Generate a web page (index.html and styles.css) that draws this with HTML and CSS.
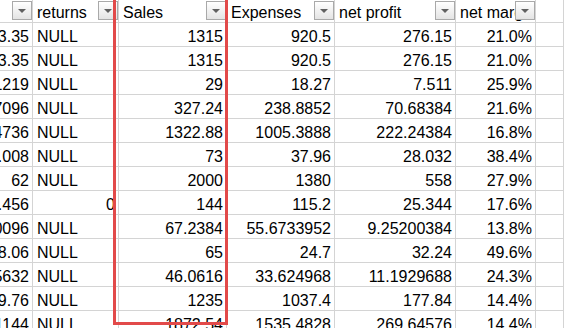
FILE: index.html
```html
<!DOCTYPE html>
<html>
<head>
<meta charset="utf-8">
<link rel="stylesheet" href="styles.css">
</head>
<body>
<div class="sheet">
  <div class="c"><span class="dd"></span></div>
  <div class="c">returns<span class="dd"></span></div>
  <div class="c">Sales<span class="dd"></span></div>
  <div class="c">Expenses<span class="dd"></span></div>
  <div class="c">net profit<span class="dd"></span></div>
  <div class="c">net margin<span class="dd"></span></div>
  <div class="c"></div>

  <div class="c n">643.35</div><div class="c">NULL</div><div class="c n">1315</div><div class="c n">920.5</div><div class="c n">276.15</div><div class="c n">21.0%</div><div class="c"></div>
  <div class="c n">643.35</div><div class="c">NULL</div><div class="c n">1315</div><div class="c n">920.5</div><div class="c n">276.15</div><div class="c n">21.0%</div><div class="c"></div>
  <div class="c n">0.1219</div><div class="c">NULL</div><div class="c n">29</div><div class="c n">18.27</div><div class="c n">7.511</div><div class="c n">25.9%</div><div class="c"></div>
  <div class="c n">0.67096</div><div class="c">NULL</div><div class="c n">327.24</div><div class="c n">238.8852</div><div class="c n">70.68384</div><div class="c n">21.6%</div><div class="c"></div>
  <div class="c n">0.14736</div><div class="c">NULL</div><div class="c n">1322.88</div><div class="c n">1005.3888</div><div class="c n">222.24384</div><div class="c n">16.8%</div><div class="c"></div>
  <div class="c n">51.008</div><div class="c">NULL</div><div class="c n">73</div><div class="c n">37.96</div><div class="c n">28.032</div><div class="c n">38.4%</div><div class="c"></div>
  <div class="c n">62</div><div class="c">NULL</div><div class="c n">2000</div><div class="c n">1380</div><div class="c n">558</div><div class="c n">27.9%</div><div class="c"></div>
  <div class="c n">51.456</div><div class="c n">0</div><div class="c n">144</div><div class="c n">115.2</div><div class="c n">25.344</div><div class="c n">17.6%</div><div class="c"></div>
  <div class="c n">0.00096</div><div class="c">NULL</div><div class="c n">67.2384</div><div class="c n">55.6733952</div><div class="c n">9.25200384</div><div class="c n">13.8%</div><div class="c"></div>
  <div class="c n">338.06</div><div class="c">NULL</div><div class="c n">65</div><div class="c n">24.7</div><div class="c n">32.24</div><div class="c n">49.6%</div><div class="c"></div>
  <div class="c n">0.65632</div><div class="c">NULL</div><div class="c n">46.0616</div><div class="c n">33.624968</div><div class="c n">11.1929688</div><div class="c n">24.3%</div><div class="c"></div>
  <div class="c n">859.76</div><div class="c">NULL</div><div class="c n">1235</div><div class="c n">1037.4</div><div class="c n">177.84</div><div class="c n">14.4%</div><div class="c"></div>
  <div class="c n">1144</div><div class="c">NULL</div><div class="c n">1872.54</div><div class="c n">1535.4828</div><div class="c n">269.64576</div><div class="c n">14.4%</div><div class="c"></div>

  <div class="sel"></div>
</div>
</body>
</html>
```

FILE: styles.css
```css
html, body {
  margin: 0;
  padding: 0;
  background: #ffffff;
}
body {
  width: 564px;
  height: 328px;
  overflow: hidden;
}
.sheet {
  position: relative;
  display: grid;
  grid-template-columns: 33px 86px 108px 108px 121px 80px 1fr;
  grid-template-rows: 23px repeat(13, 24px);
  font-family: "Liberation Sans", Arial, sans-serif;
  font-size: 16px;
  line-height: 18px;
  color: #000;
}
.c {
  position: relative;
  box-sizing: border-box;
  border-right: 1px solid #d4d4d4;
  border-bottom: 1px solid #d4d4d4;
  display: flex;
  align-items: flex-end;
  overflow: hidden;
  white-space: nowrap;
  padding: 0 3px 0 4px;
}
.n {
  justify-content: flex-end;
}
.dd {
  position: absolute;
  right: 0;
  top: 1px;
  width: 20px;
  height: 19px;
  box-sizing: border-box;
  border: 1px solid #a9a9a9;
  background: linear-gradient(#ffffff, #e4e4e4);
}
.dd::after {
  content: "";
  position: absolute;
  left: 5px;
  top: 7px;
  width: 0;
  height: 0;
  border-top: 4px solid #606060;
  border-left: 4px solid transparent;
  border-right: 4px solid transparent;
}
.sel {
  position: absolute;
  left: 113px;
  top: -4px;
  width: 115px;
  height: 329px;
  box-sizing: border-box;
  border: 3px solid #e24a4a;
}
```
